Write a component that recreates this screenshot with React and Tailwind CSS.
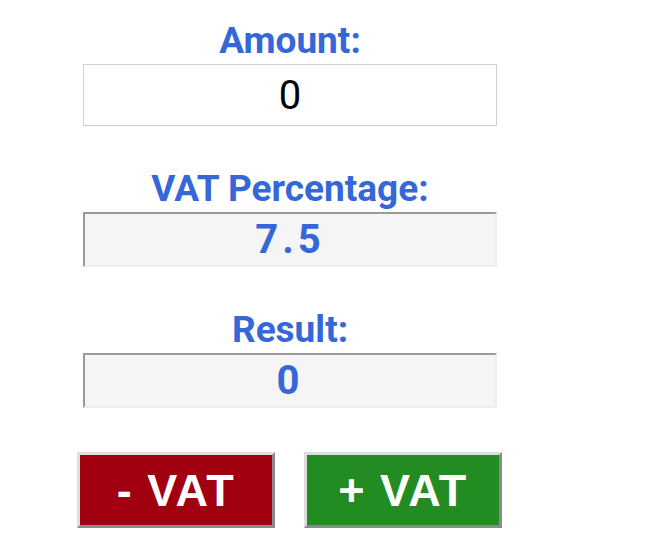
import React, { useState } from "react";

const labelCls =
  "block text-center font-bold text-[37px] leading-[46px] text-[#3567d8] font-['Roboto',sans-serif]";
const readonlyCls =
  "w-full h-[55px] bg-[#f5f5f5] border-2 border-t-[#9a9a9a] border-l-[#9a9a9a] border-r-[#eeeeee] border-b-[#eeeeee] text-center font-bold text-[40px] tracking-[4px] text-[#3567d8] font-['Roboto',sans-serif] outline-none";
const btnCls =
  "w-[198px] h-[76px] border-[3px] border-t-[#dedede] border-l-[#dedede] border-r-[#8a8a8a] border-b-[#8a8a8a] text-white font-bold text-[45px] tracking-[1.5px] leading-none font-['Liberation_Sans',Arial,sans-serif]";

export default function App() {
  const [amount, setAmount] = useState("0");
  const [result, setResult] = useState("0");
  const vat = 7.5;

  const calc = (sign) => {
    const a = parseFloat(amount) || 0;
    const r = sign > 0 ? a * (1 + vat / 100) : a / (1 + vat / 100);
    setResult(String(Math.round(r * 100) / 100));
  };

  return (
    <div className="min-h-[548px] bg-white pt-[18px]">
      <div className="ml-[83px] w-[414px]">
        <label className={labelCls}>Amount:</label>
        <input
          value={amount}
          onChange={(e) => setAmount(e.target.value)}
          className="w-full h-[62px] border border-[#cfcfcf] bg-white text-center text-[40px] text-black font-['Roboto',sans-serif] outline-none"
        />

        <label className={labelCls + " mt-[40px]"}>VAT Percentage:</label>
        <input readOnly value={vat} className={readonlyCls} />

        <label className={labelCls + " mt-[40px]"}>Result:</label>
        <input readOnly value={result} className={readonlyCls} />
      </div>

      <div className="ml-[77px] mt-[44px] flex gap-[29px]">
        <button onClick={() => calc(-1)} className={btnCls + " bg-[#a10010]"}>
          - VAT
        </button>
        <button onClick={() => calc(1)} className={btnCls + " bg-[#228b22]"}>
          + VAT
        </button>
      </div>
    </div>
  );
}
